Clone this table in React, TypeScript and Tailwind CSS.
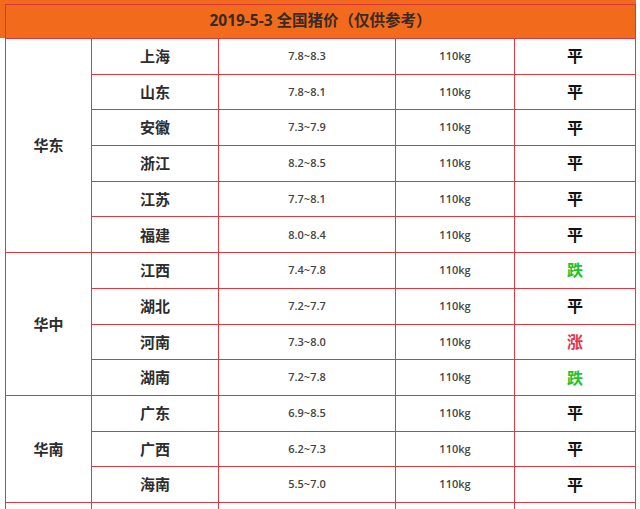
import React from 'react';

type Trend = '平' | '涨' | '跌' | '';

interface Row {
  province: string;
  price: string;
  weight: string;
  trend: Trend;
}

interface Region {
  name: string;
  rows: Row[];
}

const regions: Region[] = [
  {
    name: '华东',
    rows: [
      { province: '上海', price: '7.8~8.3', weight: '110kg', trend: '平' },
      { province: '山东', price: '7.8~8.1', weight: '110kg', trend: '平' },
      { province: '安徽', price: '7.3~7.9', weight: '110kg', trend: '平' },
      { province: '浙江', price: '8.2~8.5', weight: '110kg', trend: '平' },
      { province: '江苏', price: '7.7~8.1', weight: '110kg', trend: '平' },
      { province: '福建', price: '8.0~8.4', weight: '110kg', trend: '平' },
    ],
  },
  {
    name: '华中',
    rows: [
      { province: '江西', price: '7.4~7.8', weight: '110kg', trend: '跌' },
      { province: '湖北', price: '7.2~7.7', weight: '110kg', trend: '平' },
      { province: '河南', price: '7.3~8.0', weight: '110kg', trend: '涨' },
      { province: '湖南', price: '7.2~7.8', weight: '110kg', trend: '跌' },
    ],
  },
  {
    name: '华南',
    rows: [
      { province: '广东', price: '6.9~8.5', weight: '110kg', trend: '平' },
      { province: '广西', price: '6.2~7.3', weight: '110kg', trend: '平' },
      { province: '海南', price: '5.5~7.0', weight: '110kg', trend: '平' },
    ],
  },
  // next block starts just below the visible area
  {
    name: '',
    rows: [{ province: '', price: '', weight: '', trend: '' }],
  },
];

const trendColor: Record<Trend, string> = {
  平: 'text-[#111111]',
  涨: 'text-[#e53146]',
  跌: 'text-[#1fc42a]',
  '': '',
};

const spanClass: Record<number, string> = {
  1: 'row-span-1',
  2: 'row-span-2',
  3: 'row-span-3',
  4: 'row-span-4',
  5: 'row-span-5',
  6: 'row-span-6',
};

const font = "font-['Open_Sans','Noto_Sans_CJK_SC',sans-serif]";

export default function App() {
  return (
    <div className={`h-[509px] w-[640px] overflow-hidden bg-white ${font}`}>
      <div className="w-[636px] bg-[#f26b1d] pt-[4px]">
        <div className="ml-[5px] flex h-[34px] items-center justify-center border-x border-t border-[#d9343c] pb-[1px] text-[15.5px] font-bold text-[#3a2a22]">
          2019-5-3 全国猪价（仅供参考）
        </div>
      </div>

      <div className="ml-[5px] grid w-[631px] grid-cols-[85px_126px_176px_118px_120px] auto-rows-[34.7px] gap-px bg-[#dc3a42] p-px">
        {regions.map((region, ri) => (
          <React.Fragment key={ri}>
            <div
              className={`${spanClass[region.rows.length]} col-start-1 flex items-center justify-center bg-white text-[15px] font-bold text-[#2d2d2d]`}
            >
              {region.name}
            </div>
            {region.rows.map((row, i) => (
              <React.Fragment key={i}>
                <div className="col-start-2 flex items-center justify-center bg-white text-[15px] font-bold text-[#2d2d2d]">
                  {row.province}
                </div>
                <div className="flex items-center justify-center bg-white text-[11px] font-semibold text-[#444444]">
                  {row.price}
                </div>
                <div className="flex items-center justify-center bg-white text-[11px] font-semibold text-[#444444]">
                  {row.weight}
                </div>
                <div
                  className={`flex items-center justify-center bg-white text-[16px] font-bold ${trendColor[row.trend]}`}
                >
                  {row.trend}
                </div>
              </React.Fragment>
            ))}
          </React.Fragment>
        ))}
      </div>
    </div>
  );
}
